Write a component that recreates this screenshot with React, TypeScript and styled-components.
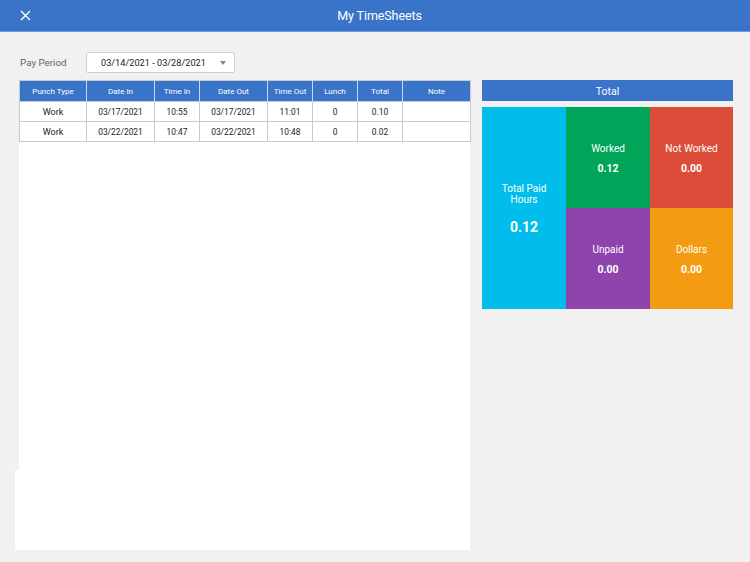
import styled, { createGlobalStyle } from "styled-components"

const GlobalStyle = createGlobalStyle`
  html, body {
    margin: 0;
    padding: 0;
    background: #f1f1f1;
    font-family: Roboto, "Liberation Sans", Arial, sans-serif;
  }
`

const rows = [
  { type: "Work", dateIn: "03/17/2021", timeIn: "10:55", dateOut: "03/17/2021", timeOut: "11:01", lunch: "0", total: "0.10", note: "" },
  { type: "Work", dateIn: "03/22/2021", timeIn: "10:47", dateOut: "03/22/2021", timeOut: "10:48", lunch: "0", total: "0.02", note: "" },
]

const columns = [
  { label: "Punch Type", width: 67 },
  { label: "Date In", width: 68 },
  { label: "Time In", width: 45 },
  { label: "Date Out", width: 68 },
  { label: "Time Out", width: 45 },
  { label: "Lunch", width: 45 },
  { label: "Total", width: 45 },
  { label: "Note", width: 68 },
]

export default function App() {
  return (
    <Page>
      <GlobalStyle />
      <Header>
        <CloseButton aria-label="close">
          <svg width="11" height="11" viewBox="0 0 11 11">
            <path d="M1 1 L10 10 M10 1 L1 10" stroke="#fff" strokeWidth="1.4" />
          </svg>
        </CloseButton>
        <Title>My TimeSheets</Title>
      </Header>

      <Content>
        <PeriodRow>
          <PeriodLabel>Pay Period</PeriodLabel>
          <Select>
            <span>03/14/2021 - 03/28/2021</span>
            <Caret />
          </Select>
        </PeriodRow>

        <Main>
          <LeftCol>
            <Sheet>
              <Table>
                <colgroup>
                  {columns.map((c) => (
                    <col key={c.label} style={{ width: c.width }} />
                  ))}
                </colgroup>
                <thead>
                  <tr>
                    {columns.map((c) => (
                      <Th key={c.label}>{c.label}</Th>
                    ))}
                  </tr>
                </thead>
                <tbody>
                  {rows.map((r, i) => (
                    <tr key={i}>
                      <Td $big>{r.type}</Td>
                      <Td>{r.dateIn}</Td>
                      <Td>{r.timeIn}</Td>
                      <Td>{r.dateOut}</Td>
                      <Td>{r.timeOut}</Td>
                      <Td>{r.lunch}</Td>
                      <Td>{r.total}</Td>
                      <Td>{r.note}</Td>
                    </tr>
                  ))}
                </tbody>
              </Table>
            </Sheet>
            <SheetFoot />
          </LeftCol>

          <RightCol>
            <TotalBar>Total</TotalBar>
            <Tiles>
              <Tile $color="#00bdeb" $tall>
                <TileLabel $wide>Total Paid Hours</TileLabel>
                <TileValue $big>0.12</TileValue>
              </Tile>
              <Tile $color="#00a55a">
                <TileLabel>Worked</TileLabel>
                <TileValue>0.12</TileValue>
              </Tile>
              <Tile $color="#dc4c38">
                <TileLabel>Not Worked</TileLabel>
                <TileValue>0.00</TileValue>
              </Tile>
              <Tile $color="#8e43ad">
                <TileLabel>Unpaid</TileLabel>
                <TileValue>0.00</TileValue>
              </Tile>
              <Tile $color="#f39c12">
                <TileLabel>Dollars</TileLabel>
                <TileValue>0.00</TileValue>
              </Tile>
            </Tiles>
          </RightCol>
        </Main>
      </Content>
    </Page>
  )
}

const Page = styled.div`
  width: 750px;
  min-height: 562px;
  background: #f1f1f1;
`

const Header = styled.header`
  height: 31px;
  background: #3a74c9;
  border-bottom: 1px solid #6e9de0;
  display: flex;
  align-items: center;
  justify-content: center;
  padding-left: 9px;
  position: relative;
`

const CloseButton = styled.div`
  position: absolute;
  left: 20px;
  top: 10px;
  width: 11px;
  height: 11px;
  display: flex;
`

const Title = styled.div`
  color: #fff;
  font-size: 12.5px;
  letter-spacing: -0.1px;
`

const Content = styled.div`
  padding: 20px 17px 0 19px;
`

const PeriodRow = styled.div`
  display: flex;
  align-items: center;
  height: 21px;
  margin-bottom: 7px;
`

const PeriodLabel = styled.div`
  width: 67px;
  padding-left: 1px;
  margin-right: -1px;
  color: #666;
  font-size: 9.8px;
`

const Select = styled.div`
  border: 1px solid #cfcfcf;
  border-radius: 2px;
  background: #fff;
  display: flex;
  align-items: center;
  justify-content: space-between;
  padding: 0 8px 0 14px;
  box-sizing: border-box;
  width: 149px;
  height: 21px;
  font-size: 9.2px;
  color: #222;
`

const Caret = styled.span`
  width: 0;
  height: 0;
  border-left: 3.5px solid transparent;
  border-right: 3.5px solid transparent;
  border-top: 4px solid #888;
`

const Main = styled.div`
  display: flex;
  gap: 12px;
  align-items: flex-start;
`

const LeftCol = styled.div`
  width: 451px;
  display: flex;
  flex-direction: column;
`

const Sheet = styled.div`
  background: #fff;
  height: 390px;
`

const SheetFoot = styled.div`
  background: #fff;
  height: 80px;
  margin-left: -4px;
`

const Table = styled.table`
  width: 451px;
  border-collapse: collapse;
  table-layout: fixed;
  border: 1px solid #c9c9c9;
`

const Th = styled.th`
  background: #3a74c9;
  color: #fff;
  font-weight: 400;
  font-size: 8px;
  height: 21px;
  padding: 0;
  border-right: 1px solid #c9d8ef;
  box-sizing: border-box;

  &:last-child {
    border-right: none;
  }
`

const Td = styled.td<{ $big?: boolean }>`
  height: 20px;
  padding: 0;
  text-align: center;
  font-size: ${(p) => (p.$big ? "9px" : "8.4px")};
  color: #222;
  border: 1px solid #c9c9c9;
  box-sizing: border-box;
`

const RightCol = styled.div`
  width: 251px;
  display: flex;
  flex-direction: column;
  gap: 6px;
`

const TotalBar = styled.div`
  height: 21px;
  background: #3a74c9;
  color: #fff;
  font-size: 10.5px;
  display: flex;
  align-items: center;
  justify-content: center;
  padding-top: 1px;
  box-sizing: border-box;
`

const Tiles = styled.div`
  display: grid;
  grid-template-columns: 84px 84px 83px;
  grid-template-rows: 101px 101px;
`

const Tile = styled.div<{ $color: string; $tall?: boolean }>`
  background: ${(p) => p.$color};
  grid-row: ${(p) => (p.$tall ? "1 / span 2" : "auto")};
  color: #fff;
  display: flex;
  flex-direction: column;
  align-items: center;
  justify-content: center;
  text-align: center;
  padding-top: 2px;
  box-sizing: border-box;
  gap: ${(p) => (p.$tall ? "14px" : "8px")};
`

const TileLabel = styled.div<{ $wide?: boolean }>`
  font-size: 10px;
  line-height: 11px;
  width: ${(p) => (p.$wide ? "60px" : "auto")};
`

const TileValue = styled.div<{ $big?: boolean }>`
  font-size: ${(p) => (p.$big ? "14px" : "10.5px")};
  font-weight: 700;
`
